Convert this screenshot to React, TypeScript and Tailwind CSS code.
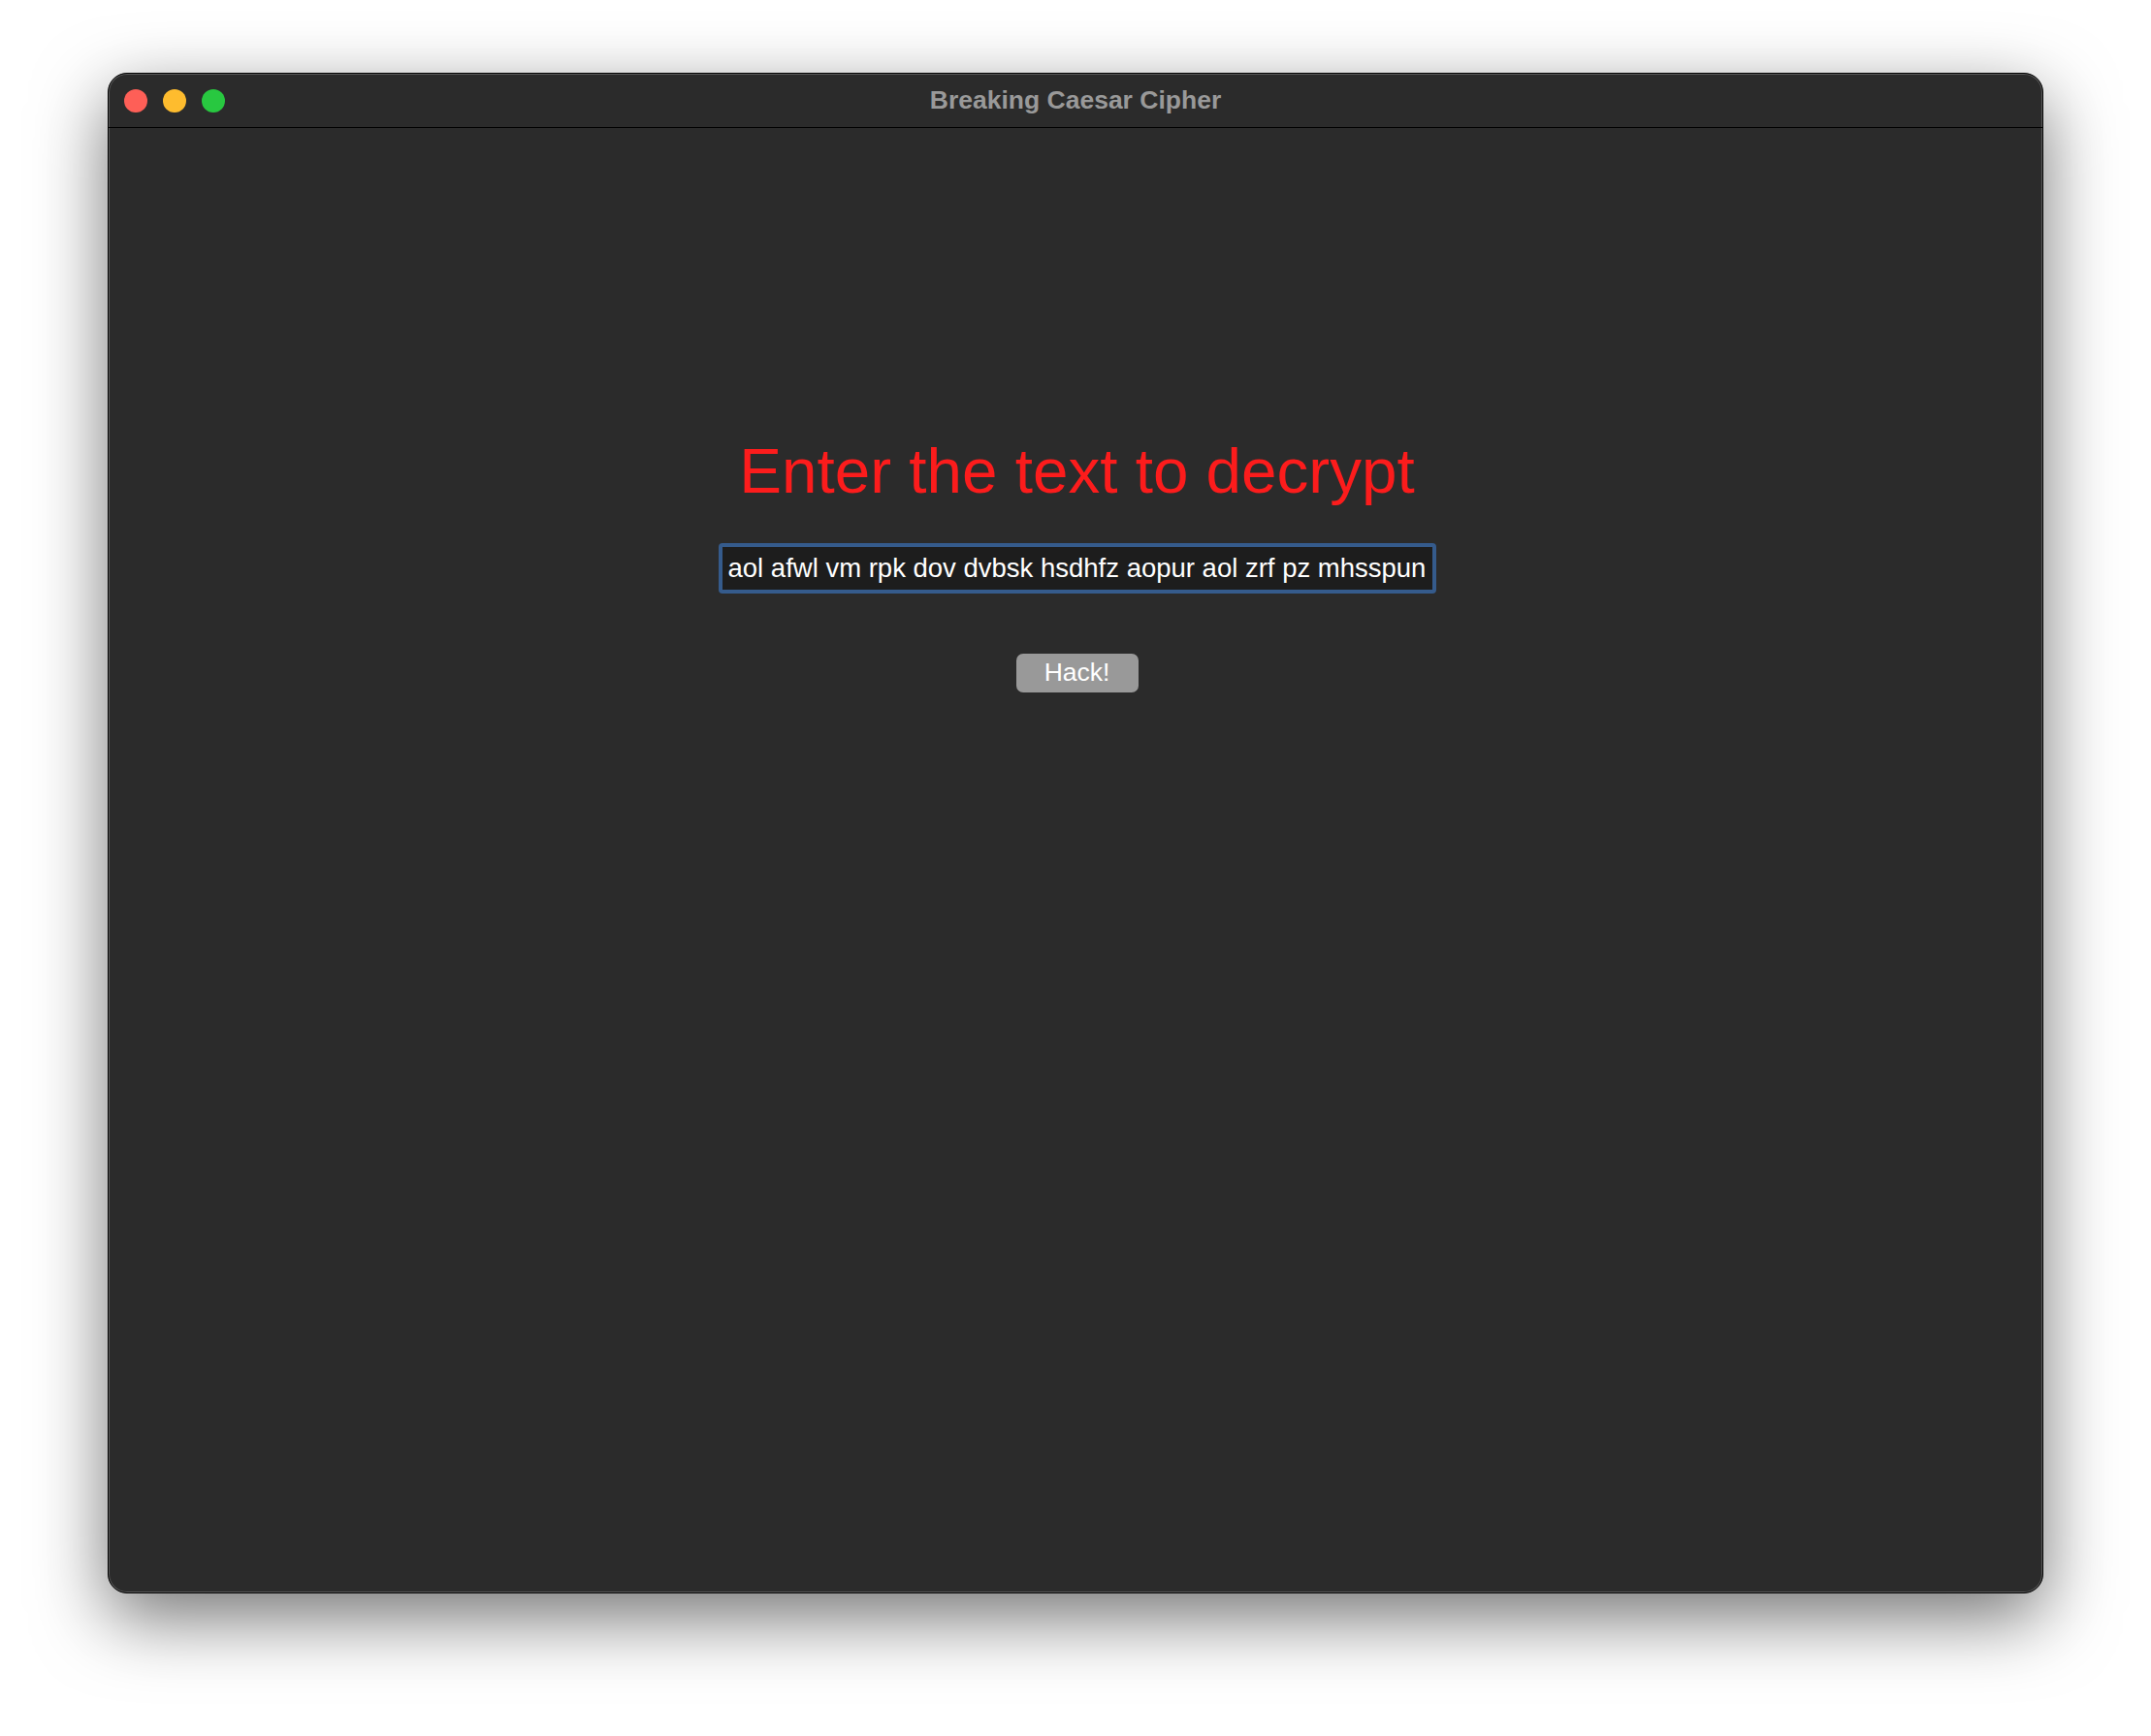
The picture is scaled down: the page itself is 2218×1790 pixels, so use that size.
import React from 'react';

// macOS-style dark window with the Caesar cipher form
const TrafficLights: React.FC = () => (
  <div className="flex items-center gap-[16px] pl-[16px]">
    <div className="w-[24px] h-[24px] rounded-full bg-[#fe5f57]" />
    <div className="w-[24px] h-[24px] rounded-full bg-[#febc2e]" />
    <div className="w-[24px] h-[24px] rounded-full bg-[#28c840]" />
  </div>
);

const App: React.FC = () => {
  return (
    <div className="min-h-screen w-full bg-white pt-[75px] pl-[111px] font-['Liberation_Sans',Arial,sans-serif]">
      <div className="w-[1996px] h-[1568px] flex flex-col rounded-[20px] border border-black bg-[#2b2b2b] overflow-hidden shadow-[inset_0_0_0_1px_#5a5a5a,0_25px_75px_rgba(0,0,0,0.55)]">
        {/* Title bar */}
        <header className="h-[56px] shrink-0 grid grid-cols-[1fr_auto_1fr] items-center border-b border-black">
          <TrafficLights />
          <span className="text-[26.5px] leading-none font-bold text-[#999999] select-none">
            Breaking Caesar Cipher
          </span>
          <div />
        </header>

        {/* Body */}
        <main className="flex-1 flex flex-col items-center pt-[321px] pl-[3px]">
          <h1 className="text-[65.6px] leading-none text-[#fc1c1c] font-normal">
            Enter the text to decrypt
          </h1>
          <input
            type="text"
            defaultValue="aol afwl vm rpk dov dvbsk hsdhfz aopur aol zrf pz mhsspun"
            className="mt-[41px] w-[740px] h-[52px] border-[4px] border-[#355b8c] rounded-[4px] bg-[#1d1d1d] pl-[6px] pr-[4px] text-[27.5px] text-white outline-none"
          />
          <button className="mt-[62px] w-[126px] h-[40px] rounded-[7px] bg-[#999999] text-white text-[26.5px] leading-none">
            Hack!
          </button>
        </main>
      </div>
    </div>
  );
};

export default App;
